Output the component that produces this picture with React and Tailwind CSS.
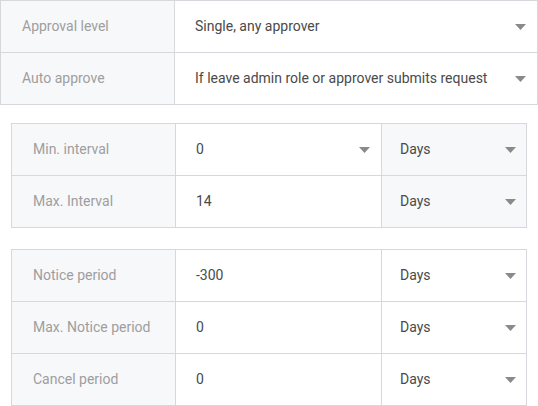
const Caret = () => (
  <svg width="11" height="6" viewBox="0 0 11 6" className="shrink-0">
    <path d="M0 0h11L5.5 6z" fill="#8a8a8a" />
  </svg>
);

const approvalRows = [
  { label: 'Approval level', value: 'Single, any approver' },
  { label: 'Auto approve', value: 'If leave admin role or approver submits request' },
];

const intervalRows = [
  { label: 'Min. interval', value: '0', select: true },
  { label: 'Max. Interval', value: '14' },
];

const noticeRows = [
  { label: 'Notice period', value: '-300' },
  { label: 'Max. Notice period', value: '0' },
  { label: 'Cancel period', value: '0' },
];

const UnitTable = ({ rows, unitBg }) => (
  <div className="mx-[11px] w-[516px] border-t border-l border-r border-[#d5d8dd]">
    {rows.map((row) => (
      <div key={row.label} className="flex h-[52px] border-b border-[#d5d8dd]">
        <div className="w-[164px] border-r border-[#d5d8dd] bg-[#f7f8fa] pl-[21px] flex items-center text-[#9e9e9e]">
          {row.label}
        </div>
        <div className="w-[206px] border-r border-[#d5d8dd] pl-[20px] pr-[11px] flex items-center justify-between text-[#4a4a4a]">
          <span>{row.value}</span>
          {row.select && <Caret />}
        </div>
        <div className={`flex-1 pl-[18px] pr-[10px] flex items-center justify-between text-[#4a4a4a] ${unitBg}`}>
          <span>Days</span>
          <Caret />
        </div>
      </div>
    ))}
  </div>
);

export default function App() {
  return (
    <div className="w-[538px] h-[406px] bg-white text-[14px] overflow-hidden" style={{ fontFamily: 'Roboto, sans-serif' }}>
      <div className="border-t border-l border-r border-[#d5d8dd]">
        {approvalRows.map((row) => (
          <div key={row.label} className="flex h-[52px] border-b border-[#d5d8dd]">
            <div className="w-[174px] border-r border-[#d5d8dd] bg-[#f7f8fa] pl-[21px] flex items-center text-[#9e9e9e]">
              {row.label}
            </div>
            <div className="flex-1 pl-[20px] pr-[11px] flex items-center justify-between text-[#4a4a4a]">
              <span>{row.value}</span>
              <Caret />
            </div>
          </div>
        ))}
      </div>
      <div className="mt-[18px]">
        <UnitTable rows={intervalRows} unitBg="bg-[#f7f8fa]" />
      </div>
      <div className="mt-[21px]">
        <UnitTable rows={noticeRows} unitBg="bg-white" />
      </div>
    </div>
  );
}
